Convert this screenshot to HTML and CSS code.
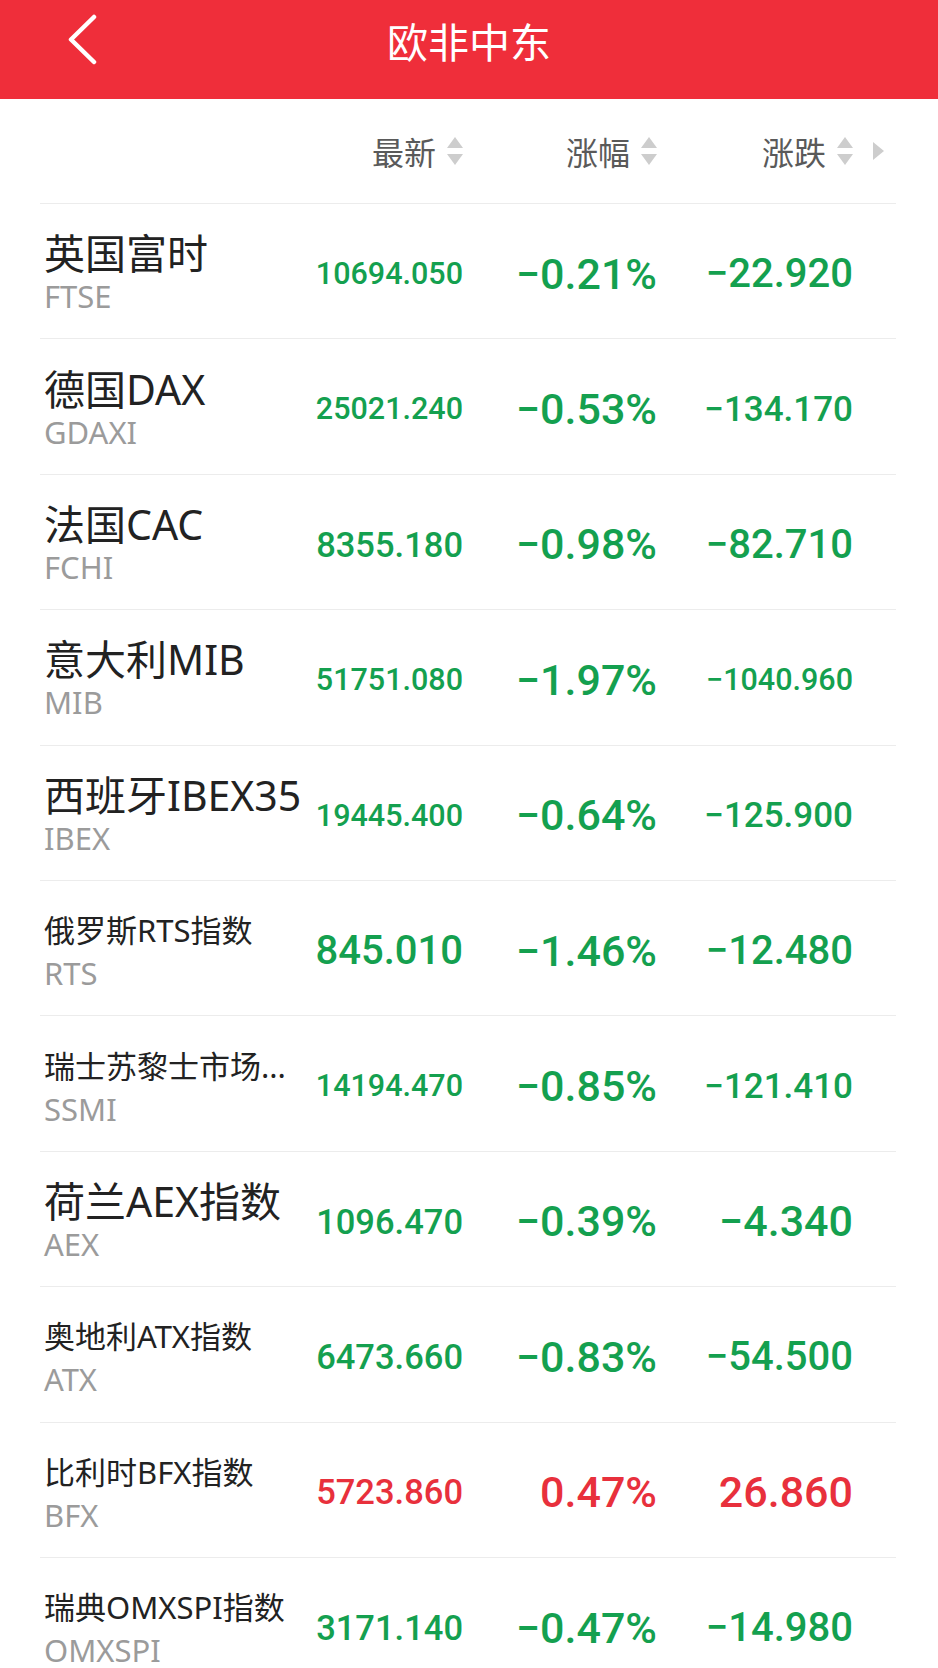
FILE: index.html
```html
<!DOCTYPE html>
<html lang="zh-CN">
<head>
  <meta charset="UTF-8" />
  <meta name="viewport" content="width=device-width, initial-scale=1.0"/>
  <title>欧非中东</title>
  <link rel="stylesheet" href="styles.css">
</head>
<body>
  <div class="topbar">
    <a class="back" href="#">
      <svg width="34" height="54" viewBox="0 0 34 54">
        <polyline points="28,6 5,28.5 28,51" fill="none" stroke="#fff" stroke-width="4.5" stroke-linecap="round" stroke-linejoin="round"/>
      </svg>
    </a>
    <div class="title">欧非中东</div>
    <div></div>
  </div>

  <div class="list">
    <div class="row head">
      <div></div>
      <div class="cell">最新<span class="sort"></span></div>
      <div class="cell">涨幅<span class="sort"></span></div>
      <div class="cell c3">涨跌<span class="sort"></span></div>
      <div class="more"></div>
    </div>

    <div class="row">
      <div class="name"><div class="cn">英国富时</div><div class="code">FTSE</div></div>
      <div class="cell c1 down"><span class="fit">10694.050</span></div>
      <div class="cell c2 down"><span class="fit">−0.21%</span></div>
      <div class="cell c3 down"><span class="fit">−22.920</span></div>
    </div>
    <div class="row">
      <div class="name"><div class="cn">德国DAX</div><div class="code">GDAXI</div></div>
      <div class="cell c1 down"><span class="fit">25021.240</span></div>
      <div class="cell c2 down"><span class="fit">−0.53%</span></div>
      <div class="cell c3 down"><span class="fit">−134.170</span></div>
    </div>
    <div class="row">
      <div class="name"><div class="cn">法国CAC</div><div class="code">FCHI</div></div>
      <div class="cell c1 down"><span class="fit">8355.180</span></div>
      <div class="cell c2 down"><span class="fit">−0.98%</span></div>
      <div class="cell c3 down"><span class="fit">−82.710</span></div>
    </div>
    <div class="row">
      <div class="name"><div class="cn">意大利MIB</div><div class="code">MIB</div></div>
      <div class="cell c1 down"><span class="fit">51751.080</span></div>
      <div class="cell c2 down"><span class="fit">−1.97%</span></div>
      <div class="cell c3 down"><span class="fit">−1040.960</span></div>
    </div>
    <div class="row">
      <div class="name"><div class="cn">西班牙IBEX35</div><div class="code">IBEX</div></div>
      <div class="cell c1 down"><span class="fit">19445.400</span></div>
      <div class="cell c2 down"><span class="fit">−0.64%</span></div>
      <div class="cell c3 down"><span class="fit">−125.900</span></div>
    </div>
    <div class="row">
      <div class="name"><div class="cn small">俄罗斯RTS指数</div><div class="code">RTS</div></div>
      <div class="cell c1 down"><span class="fit">845.010</span></div>
      <div class="cell c2 down"><span class="fit">−1.46%</span></div>
      <div class="cell c3 down"><span class="fit">−12.480</span></div>
    </div>
    <div class="row">
      <div class="name"><div class="cn small">瑞士苏黎士市场...</div><div class="code">SSMI</div></div>
      <div class="cell c1 down"><span class="fit">14194.470</span></div>
      <div class="cell c2 down"><span class="fit">−0.85%</span></div>
      <div class="cell c3 down"><span class="fit">−121.410</span></div>
    </div>
    <div class="row">
      <div class="name"><div class="cn">荷兰AEX指数</div><div class="code">AEX</div></div>
      <div class="cell c1 down"><span class="fit">1096.470</span></div>
      <div class="cell c2 down"><span class="fit">−0.39%</span></div>
      <div class="cell c3 down"><span class="fit">−4.340</span></div>
    </div>
    <div class="row">
      <div class="name"><div class="cn small">奥地利ATX指数</div><div class="code">ATX</div></div>
      <div class="cell c1 down"><span class="fit">6473.660</span></div>
      <div class="cell c2 down"><span class="fit">−0.83%</span></div>
      <div class="cell c3 down"><span class="fit">−54.500</span></div>
    </div>
    <div class="row">
      <div class="name"><div class="cn small">比利时BFX指数</div><div class="code">BFX</div></div>
      <div class="cell c1 up"><span class="fit">5723.860</span></div>
      <div class="cell c2 up"><span class="fit">0.47%</span></div>
      <div class="cell c3 up"><span class="fit">26.860</span></div>
    </div>
    <div class="row">
      <div class="name"><div class="cn small">瑞典OMXSPI指数</div><div class="code">OMXSPI</div></div>
      <div class="cell c1 down"><span class="fit">3171.140</span></div>
      <div class="cell c2 down"><span class="fit">−0.47%</span></div>
      <div class="cell c3 down"><span class="fit">−14.980</span></div>
    </div>
  </div>

  <script>
    // shrink numbers until they fit their column
    document.querySelectorAll(".fit").forEach(function (el) {
      const cell = el.parentElement;
      const room = cell.clientWidth - parseFloat(getComputedStyle(cell).paddingLeft);
      let size = parseFloat(getComputedStyle(el).fontSize);
      while (el.getBoundingClientRect().width > room && size > 12) {
        size -= 0.5;
        el.style.fontSize = size + "px";
      }
    });
  </script>
</body>
</html>
```

FILE: styles.css
```css
body {
  margin: 0;
  background: #fff;
  font-family: "Noto Sans", "Noto Sans CJK SC", sans-serif;
  color: #222;
}
.topbar {
  height: 99px;
  background: #ef2e3a;
  display: grid;
  grid-template-columns: 1fr auto 1fr;
  align-items: start;
}
.back {
  display: block;
  margin: 11px 0 0 66px;
  width: 34px;
  height: 54px;
}
.title {
  font-family: "Noto Sans CJK SC", sans-serif;
  font-size: 41px;
  line-height: 56px;
  margin-top: 12px;
  color: #fff;
}
.list {
  padding: 0 42px 0 40px;
}
.row {
  display: grid;
  grid-template-columns: 271px 148px 194px 196px 1fr;
  align-items: center;
  padding-left: 4px;
  height: 134.4px;
  border-bottom: 1px solid #ececec;
}
.head {
  height: 104px;
  font-family: "Noto Sans CJK SC", sans-serif;
  font-size: 32px;
  color: #5a5a5a;
}
.cell {
  display: flex;
  justify-content: flex-end;
  align-items: center;
  white-space: nowrap;
}
.c3 {
  padding-left: 47px;
}
/* up / down sort arrows */
.sort {
  position: relative;
  width: 16px;
  height: 29px;
  margin-left: 11px;
}
.sort::before,
.sort::after {
  content: "";
  position: absolute;
  left: 0;
  border-left: 8px solid transparent;
  border-right: 8px solid transparent;
}
.sort::before {
  top: 0;
  border-bottom: 11px solid #cdcdcd;
}
.sort::after {
  top: 17px;
  border-top: 11px solid #cdcdcd;
}
.more {
  justify-self: start;
  margin-left: 20px;
  width: 0;
  height: 0;
  border-top: 9.5px solid transparent;
  border-bottom: 9.5px solid transparent;
  border-left: 11px solid #cdcdcd;
}
.name {
  white-space: nowrap;
}
.cn {
  font-size: 41px;
  line-height: 50px;
  color: #222;
}
.cn.small {
  font-size: 31px;
}
.code {
  font-size: 31px;
  line-height: 36px;
  color: #9b9b9b;
}
.fit {
  display: inline-block;
  margin-top: 6px;
  font-family: Roboto, "Liberation Sans", sans-serif;
  font-weight: 500;
  line-height: 1;
}
.c1 .fit {
  font-size: 44px;
}
.c2 .fit,
.c3 .fit {
  font-size: 43px;
}
.down {
  color: #14a04f;
}
.up {
  color: #e8303c;
}
```
